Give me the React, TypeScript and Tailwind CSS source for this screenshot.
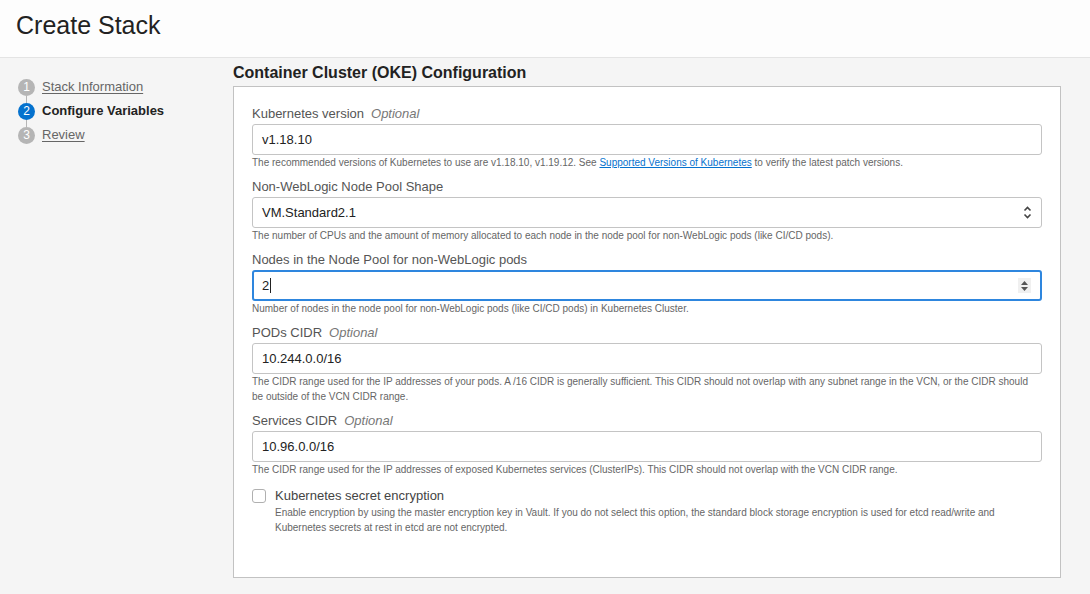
import { useState } from 'react';

const steps = [
  { n: 1, label: 'Stack Information', active: false },
  { n: 2, label: 'Configure Variables', active: true },
  { n: 3, label: 'Review', active: false },
];

function Label({ text, optional }: { text: string; optional?: boolean }) {
  return (
    <div className="mb-[2px] h-4 text-[13px] leading-4 text-[#555]">
      {text}
      {optional && <span className="ml-[7px] italic text-[#777]">Optional</span>}
    </div>
  );
}

function Help({ children }: { children: React.ReactNode }) {
  return <div className="mb-[9px] text-[10px] leading-[15px] text-[#666]">{children}</div>;
}

function TextInput({ value }: { value: string }) {
  return (
    <div className="flex h-[31px] items-center rounded-[3px] border border-[#c4c4c4] bg-white px-[9px] text-[13px] text-[#222]">
      {value}
    </div>
  );
}

export default function App() {
  const [encrypt, setEncrypt] = useState(false);

  return (
    <div className="min-h-[594px] bg-[#f5f5f5] font-['Liberation_Sans',Arial,sans-serif]">
      <div className="h-[58px] border-b border-[#e4e4e4] bg-[#fdfdfd] pl-4 pt-[9px]">
        <h1 className="text-[25px] leading-8 text-[#222]">Create Stack</h1>
      </div>

      <div className="flex">
        {/* steps */}
        <div className="w-[233px] shrink-0 pl-[18px] pt-[17px]">
          {steps.map((s, i) => (
            <div key={s.n} className="flex h-6 items-center">
              <div className="relative flex h-[17px] w-[17px] items-center justify-center">
                {i > 0 && <div className="absolute bottom-[17px] left-2 h-[7px] w-px bg-[#b5b5b5]" />}
                <div
                  className={
                    s.active
                      ? 'flex h-[17px] w-[17px] items-center justify-center rounded-full bg-[#0572ce] text-[12px] text-white'
                      : 'flex h-[17px] w-[17px] items-center justify-center rounded-full bg-[#b5b5b5] text-[12px] text-white'
                  }
                >
                  {s.n}
                </div>
              </div>
              <span
                className={
                  s.active
                    ? 'ml-[7px] text-[13px] font-bold text-[#222]'
                    : 'ml-[7px] text-[13px] text-[#666] underline underline-offset-2'
                }
              >
                {s.label}
              </span>
            </div>
          ))}
        </div>

        {/* main */}
        <div className="w-[828px] pt-[4px]">
          <h2 className="mb-[3px] text-[16px] font-bold leading-[21px] text-[#222]">
            Container Cluster (OKE) Configuration
          </h2>
          <div className="h-[492px] border border-[#c2c2c2] bg-white px-[18px] pt-[19px]">
            <Label text="Kubernetes version" optional />
            <TextInput value="v1.18.10" />
            <Help>
              The recommended versions of Kubernetes to use are v1.18.10, v1.19.12. See{' '}
              <span className="text-[#0572ce] underline">Supported Versions of Kubernetes</span> to verify the
              latest patch versions.
            </Help>

            <Label text="Non-WebLogic Node Pool Shape" />
            <div className="flex h-[31px] items-center justify-between rounded-[3px] border border-[#c4c4c4] bg-white px-[9px] text-[13px] text-[#222]">
              <span>VM.Standard2.1</span>
              <svg width="9" height="13" viewBox="0 0 9 13" fill="none" stroke="#444" strokeWidth="1.6">
                <path d="M1.5 4.5 4.5 1.5 7.5 4.5" />
                <path d="M1.5 8.5 4.5 11.5 7.5 8.5" />
              </svg>
            </div>
            <Help>
              The number of CPUs and the amount of memory allocated to each node in the node pool for non-WebLogic
              pods (like CI/CD pods).
            </Help>

            <Label text="Nodes in the Node Pool for non-WebLogic pods" />
            <div className="flex h-[31px] items-center justify-between rounded-[3px] border-2 border-[#2e86de] bg-white pl-2 pr-[9px] text-[13px] text-[#222]">
              <span className="flex items-center">
                2<span className="ml-px h-[15px] w-px bg-[#222]" />
              </span>
              <div className="flex h-[15px] w-[13px] flex-col items-center justify-center gap-[2px] bg-[#f0f0f0]">
                <svg width="7" height="4" viewBox="0 0 7 4">
                  <path d="M0 4 3.5 0 7 4Z" fill="#555" />
                </svg>
                <svg width="7" height="4" viewBox="0 0 7 4">
                  <path d="M0 0 3.5 4 7 0Z" fill="#555" />
                </svg>
              </div>
            </div>
            <Help>Number of nodes in the node pool for non-WebLogic pods (like CI/CD pods) in Kubernetes Cluster.</Help>

            <Label text="PODs CIDR" optional />
            <TextInput value="10.244.0.0/16" />
            <Help>
              The CIDR range used for the IP addresses of your pods. A /16 CIDR is generally sufficient. This CIDR
              should not overlap with any subnet range in the VCN, or the CIDR should
              <br />
              be outside of the VCN CIDR range.
            </Help>

            <Label text="Services CIDR" optional />
            <TextInput value="10.96.0.0/16" />
            <Help>
              The CIDR range used for the IP addresses of exposed Kubernetes services (ClusterIPs). This CIDR should not
              overlap with the VCN CIDR range.
            </Help>

            <div className="mt-[11px] flex">
              <button
                type="button"
                onClick={() => setEncrypt(!encrypt)}
                className="mt-[1px] h-[14px] w-[14px] shrink-0 rounded-[3px] border border-[#b0b0b0] bg-white"
              />
              <div className="ml-[9px]">
                <div className="mb-px text-[13px] leading-4 text-[#444]">Kubernetes secret encryption</div>
                <div className="text-[10px] leading-[15px] text-[#666]">
                  Enable encryption by using the master encryption key in Vault. If you do not select this option, the
                  standard block storage encryption is used for etcd read/write and
                  <br />
                  Kubernetes secrets at rest in etcd are not encrypted.
                </div>
              </div>
            </div>
          </div>
        </div>
      </div>
    </div>
  );
}
